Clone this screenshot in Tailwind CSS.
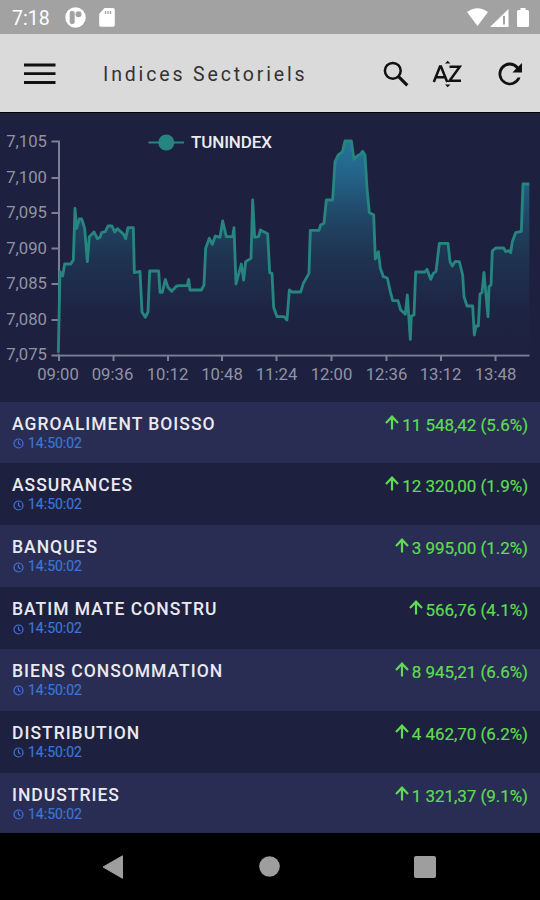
<!DOCTYPE html>
<html lang="fr">

<head>
  <meta charset="UTF-8">
  <meta name="viewport" content="width=device-width, initial-scale=1.0">
  <title>Indices Sectoriels</title>
  <script src="https://cdn.jsdelivr.net/npm/@tailwindcss/browser@4"></script>
</head>

<body class="w-[540px] h-[900px] overflow-hidden flex flex-col bg-black font-['Roboto',sans-serif]">

  <!-- Status bar -->
  <div class="h-[34px] shrink-0 bg-[#a2a2a2] text-white flex items-center pl-3 pr-[10px]">
    <span class="text-[19.5px] leading-none w-[53px] pt-[3px]">7:18</span>
    <svg class="w-[21px] h-[21px] mt-px" viewBox="0 0 21 21">
      <circle cx="10.5" cy="10.5" r="10.2" fill="#fff" />
      <rect x="4.700" y="4" width="5" height="13" rx="2" fill="#a2a2a2" />
      <circle cx="13.500" cy="7.200" r="3" fill="#a2a2a2" />
    </svg>
    <svg class="w-4 h-[19px] ml-[13px] mt-px" viewBox="0 0 16 19">
      <path d="M5.5 0H14a1.8 1.8 0 0 1 1.8 1.8v15A1.8 1.8 0 0 1 14 18.700H2a1.800 1.800 0 0 1-1.800-1.800V6z" fill="#fff" />
      <path d="M6.500 3v3M9 3v3M11.500 3v3" stroke="#a2a2a2" stroke-width="1.300" />
    </svg>
    <div class="ml-auto flex items-center">
      <svg class="w-[21px] h-[18px]" viewBox="0 0 21 18">
        <path d="M0 4Q10.500-3.600 21 4L10.500 18z" fill="#fff" />
      </svg>
      <svg class="w-[19px] h-[18px] ml-[2px] mt-px" viewBox="0 0 19 18">
        <path d="M18.500 0v18H0z" fill="#fff" />
        <path d="M14 7v8.500" stroke="#a2a2a2" stroke-width="2" />
      </svg>
      <svg class="w-3 h-[19px] ml-[8px] mr-px mt-px" viewBox="0 0 12 19">
        <path d="M3.500 0h5v2H10.500a1.500 1.500 0 0 1 1.500 1.500V17.500a1.500 1.500 0 0 1-1.500 1.500h-9A1.500 1.500 0 0 1 0 17.500V3.500A1.500 1.500 0 0 1 1.500 2h2z" fill="#fff" />
      </svg>
    </div>
  </div>

  <!-- App bar -->
  <header class="h-[79px] shrink-0 bg-[#dadada] border-b border-black text-[#111] flex items-center pl-6 pr-[17px]">
    <svg class="w-8 h-[22px] mt-[2px]" viewBox="0 0 32 22">
      <path d="M0 2h31.500M0 10.700h31.500M0 19.500h31.500" stroke="currentColor" stroke-width="2.800" />
    </svg>
    <h1 class="ml-[47px] mt-[3px] text-[19.5px] leading-none tracking-[2.85px] text-[#333] whitespace-nowrap">Indices Sectoriels</h1>
    <div class="ml-auto flex items-center">
      <svg class="w-[26px] h-[26px] mt-px" viewBox="0 0 26 26" fill="none" stroke="currentColor">
        <circle cx="9.800" cy="9.800" r="7.900" stroke-width="2.500" />
        <path d="M15.300 15.300l9 9" stroke-width="3.200" />
      </svg>
      <svg class="w-[30px] h-7 ml-[23px] mt-[2px]" viewBox="0 0 30 28" fill="none" stroke="currentColor" stroke-width="2.500">
        <path d="M1.800 22L8 6.500h1L15.200 22M4 17.300h9M17.500 6.700h10.300L17.600 20.800h11.400" />
        <path d="M13 3.500L15.700.7l2.700 2.800zM13 24.500l2.700 2.800 2.700-2.800z" fill="currentColor" stroke="none" />
      </svg>
      <svg class="w-6 h-6 ml-[36px] mr-px mt-[2px]" viewBox="0 0 24 24">
        <path d="M20.300 4.400A11.300 11.300 0 1 0 22.500 15.500H19.600A8.500 8.500 0 1 1 18.200 6.500L14.500 10.500H24V1z" fill="currentColor" />
      </svg>
    </div>
  </header>

  <!-- TUNINDEX chart -->
  <section class="h-[288.500px] shrink-0 bg-[#1e203f]">
    <svg class="block w-[540px] h-[288px]" viewBox="0 0 540 288">
      <defs>
        <linearGradient id="area" gradientUnits="userSpaceOnUse" x1="0" y1="60" x2="0" y2="705">
          <stop offset="0" stop-color="#25759a" />
          <stop offset="0.150" stop-color="#24658a" />
          <stop offset="0.350" stop-color="#204766" />
          <stop offset="0.550" stop-color="#1e3350" />
          <stop offset="0.800" stop-color="#1e2443" />
          <stop offset="1" stop-color="#1e203f" />
        </linearGradient>
      </defs>

      <path d="M51.500 28.500H59V242M51.500 65H59M51.500 100H59M51.500 135.500H59M51.500 171H59M51.500 207H59M51.500 242.500H529.500M59 242v6M113.500 242v6M168 242v6M222 242v6M276.500 242v6M331.500 242v6M386.500 242v6M441 242v6M495.500 242v6" fill="none" stroke="#7d7f94" stroke-width="2" />

      <g transform="translate(0 7) scale(0.33333)">
        <path id="fill" fill="url(#area)" />
        <polyline id="line" fill="none" stroke="#26857f" stroke-width="8.500" stroke-linejoin="round" points="175,698 180,455 188,468 194,432 212,432 220,420 225,265 230,325 238,297 245,297 254,325 262,425 268,350 282,336 292,356 300,352 305,338 316,335 324,318 336,318 344,336 352,326 370,342 377,356 384,323 400,323 403,458 420,454 426,576 436,592 444,576 449,453 476,453 480,517 487,517 496,478 504,502 515,514 530,498 540,497 562,497 566,478 570,510 604,510 612,495 617,385 628,355 637,373 646,348 660,352 668,303 679,350 698,350 702,323 708,492 724,432 731,480 737,425 753,415 758,240 764,352 776,350 781,330 803,341 809,458 816,460 821,562 831,590 852,590 861,600 868,510 876,516 902,516 910,490 927,460 931,331 957,331 962,315 972,310 979,240 998,240 1005,125 1015,105 1027,96 1035,63 1054,63 1062,118 1074,106 1080,104 1088,94 1095,105 1101,205 1108,278 1121,284 1126,417 1135,395 1141,445 1150,470 1162,474 1171,515 1178,542 1194,542 1202,570 1216,583 1222,525 1231,658 1234,588 1242,585 1247,456 1275,456 1281,448 1292,478 1300,460 1308,455 1318,370 1344,370 1350,425 1357,438 1366,424 1378,425 1388,465 1392,530 1401,558 1418,558 1423,645 1428,618 1435,618 1440,522 1446,518 1452,457 1464,590 1467,500 1473,495 1477,393 1487,384 1511,384 1517,395 1527,392 1532,398 1537,365 1547,338 1564,334 1569,192 1588,192" />
      </g>

      <g fill="#9193a5" font-size="16.700" text-anchor="end">
        <text x="47" y="34">7,105</text>
        <text x="47" y="70">7,100</text>
        <text x="47" y="105">7,095</text>
        <text x="47" y="141">7,090</text>
        <text x="47" y="176">7,085</text>
        <text x="47" y="212">7,080</text>
        <text x="47" y="247">7,075</text>
      </g>
      <g fill="#9193a5" font-size="16.700" text-anchor="middle">
        <text x="58" y="266.500">09:00</text>
        <text x="112.500" y="266.500">09:36</text>
        <text x="167.500" y="266.500">10:12</text>
        <text x="222" y="266.500">10:48</text>
        <text x="276.500" y="266.500">11:24</text>
        <text x="331.500" y="266.500">12:00</text>
        <text x="386.500" y="266.500">12:36</text>
        <text x="440.500" y="266.500">13:12</text>
        <text x="495.500" y="266.500">13:48</text>
      </g>

      <!-- Legend -->
      <path d="M148.500 29.500h35.500" stroke="#26857f" stroke-width="2" />
      <circle cx="166.300" cy="29.500" r="8" fill="#26857f" />
      <text x="191" y="35" fill="#ececf0" font-size="17" font-weight="500" textLength="81">TUNINDEX</text>
    </svg>
  </section>

  <!-- Sector list -->
  <ul id="sectors" class="h-[431.500px] shrink-0 overflow-hidden"></ul>

  <!-- Android navigation -->
  <nav class="flex-1 bg-black flex items-center text-[#9e9e9e] pl-[102px] pr-[104px] justify-between">
    <svg class="w-[22px] h-6" viewBox="0 0 22 24"><path d="M20.500.8v22.500L1 12z" fill="currentColor" stroke="currentColor" stroke-linejoin="round" /></svg>
    <svg class="w-[21px] h-[21px]" viewBox="0 0 21 21"><circle cx="10.500" cy="10.500" r="10.300" fill="currentColor" /></svg>
    <svg class="w-[22px] h-[22px]" viewBox="0 0 22 22"><rect width="22" height="22" rx="2" fill="currentColor" /></svg>
  </nav>

  <script>
    const sectors = [
      ["AGROALIMENT BOISSO", "11 548,42 (5.6%)"],
      ["ASSURANCES", "12 320,00 (1.9%)"],
      ["BANQUES", "3 995,00 (1.2%)"],
      ["BATIM MATE CONSTRU", "566,76 (4.1%)"],
      ["BIENS CONSOMMATION", "8 945,21 (6.6%)"],
      ["DISTRIBUTION", "4 462,70 (6.2%)"],
      ["INDUSTRIES", "1 321,37 (9.1%)"],
    ];

    document.getElementById("sectors").innerHTML = sectors.map(([name, value]) => `
      <li class="h-[61.850px] flex justify-between pl-3 pr-[12px] odd:bg-[#292d53] even:bg-[#1e203f]">
        <div class="pt-[12px]">
          <div class="text-[17.5px] leading-[21px] font-medium tracking-[1px] text-[#e9e9ef]">${name}</div>
          <div class="flex items-center text-[14px] leading-[17px] text-[#3d74d6]">
            <svg class="w-[11px] h-[11px] ml-px mr-1 mt-px" viewBox="0 0 11 11" fill="none" stroke="currentColor" stroke-width="1.200">
              <circle cx="5.500" cy="5.500" r="4.500" />
              <path d="M5.500 2.500v3l2 1.500" />
            </svg>
            <span class="[-webkit-text-stroke:0.2px]">14:50:02</span>
          </div>
        </div>
        <div class="flex items-start pt-[13px] text-[#5edb52]">
          <svg class="w-[14px] h-[15px] mr-[3px]" viewBox="0 0 14 15" fill="none" stroke="currentColor" stroke-width="2.200">
            <path d="M7 14.500V2M1 8l6-6.300L13 8" />
          </svg>
          <span class="text-[17px] leading-5 tracking-[-0.05px] [-webkit-text-stroke:0.2px]">${value}</span>
        </div>
      </li>`).join("");

    // close the line down to the x axis for the gradient area
    const points = document.getElementById("line").getAttribute("points");
    document.getElementById("fill").setAttribute("d", `M${points} L1588,703 L175,703z`);
  </script>

</body>

</html>
